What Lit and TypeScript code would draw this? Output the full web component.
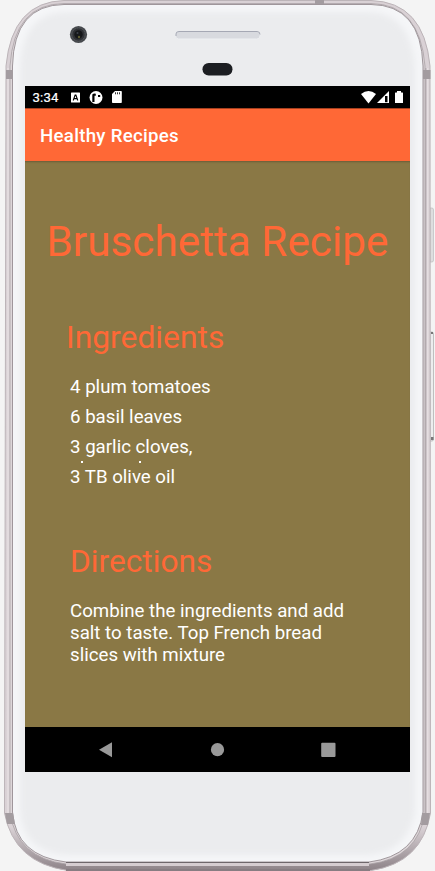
import { LitElement, html, css, svg } from "lit";
import { customElement } from "lit/decorators.js";

@customElement("phone-shell")
class PhoneShell extends LitElement {
  static styles = css`
    :host { display: block; width: 435px; height: 871px; }
    svg { display: block; }
  `;
  render() {
    return html`<svg width="435" height="871" viewBox="0 0 435 871">
      <defs>
        <linearGradient id="base" x1="0" x2="0" y1="0" y2="1">
          <stop offset="0" stop-color="#d9d1d5" /><stop offset=".95" stop-color="#dad2d6" /><stop offset="1" stop-color="#8d8388" />
        </linearGradient>
        <filter id="soft" x="-10%" y="-10%" width="120%" height="120%"><feGaussianBlur stdDeviation="3" /></filter>
        <clipPath id="face"><path d="M64 4.500H371Q421 5 423 66V812Q417 858 369 862H66Q16 858 12.500 812V66Q14 5 64 4.500Z" /></clipPath>
      </defs>
      <path d="M430 208h2q1.500 0 1.500 2v50q0 2-1.500 2h-2z" fill="#dededf" stroke="#b5b5b7" stroke-width=".6" />
      <path d="M430 332h2q1.500 0 1.500 2v105q0 2-1.500 2h-2z" fill="#ededee" stroke="#a9a9a9" stroke-width=".7" />
      <path d="M431 332h2v2h-2zM431 437h2.500v3h-2.500z" fill="#777" />
      <path d="M64 .5H371Q424 2 430 66L430.500 813Q422 863 371 870.500H68Q14 863 4.500 813L6 66Q12 2 64 .5Z" fill="url(#base)" stroke="#bcb4b8" />
      <path d="M64 3.500H371Q420 4 425 66V813Q418 858 370 864H66Q17 858 10 813V66Q14 4 64 3.500Z" fill="#ddd6d9" stroke="#aaa2a6" stroke-width=".8" />
      <path d="M64 4.500H371Q421 5 423 66V812Q417 856 369 862H66Q16 856 12.500 812V66Q14 5 64 4.500Z" fill="#f5f6f8" stroke="#8b8287" stroke-width=".8" />
      <path d="M64 12H371Q410 14 415 66V812Q407 852 369 855H66Q24 852 20 812V66Q23 14 64 12Z" fill="#ebecee" filter="url(#soft)" clip-path="url(#face)" />
      <path d="M427.700 68V813M8 68V813" stroke="#e5dee1" stroke-width="1.500" />
      <path d="M425.800 68V813" stroke="#a1989d" stroke-width=".8" />
      <path d="M66 862.500H369" stroke="#6e676b" stroke-width="1" />
      <path d="M66 864.500H369" stroke="#d5cdd1" stroke-width="3" />
      <path d="M66 870H370" stroke="#877d82" stroke-width="2" />
      <path d="M6 70h7v9H6zM423 70h7.500v9H423zM315 0h9v4h-9zM5 813h8l2 11H7zM422 813h8l-2 12h-7z" fill="#a39ca0" />
      <circle cx="78.500" cy="34.500" r="8.600" fill="#45484c" />
      <circle cx="78.500" cy="34.500" r="6.500" fill="#303236" stroke="#65686c" stroke-width=".8" stroke-dasharray="1 1" />
      <circle cx="78.500" cy="34.500" r="4.200" fill="#15171a" />
      <circle cx="79" cy="37" r="1.200" fill="#5e5d32" />
      <circle cx="77.500" cy="33" r="1" fill="#3c424a" />
      <rect x="175.500" y="31.500" width="84.500" height="7.500" rx="3.200" fill="#d8dadf" stroke="#eef0f2" />
      <path d="M176 36v-2q0-2.500 3-2.500H257q3 0 3 3" fill="none" stroke="#a5a8b4" />
      <rect x="202.500" y="63" width="30" height="12.500" rx="6.200" fill="#1c1e22" />
    </svg>`;
  }
}

@customElement("status-bar")
class StatusBar extends LitElement {
  static styles = css`
    :host { display: flex; height: 22px; background: #000; color: #fff; font: 400 13.200px/22px Roboto, sans-serif; }
    .clock { flex: none; width: 45px; padding-left: 7.500px; box-sizing: border-box; height: 22px; padding-top: 1px; letter-spacing: .2px; -webkit-text-stroke: .2px #fff; }
    .spacer { flex: 1; }
    svg { display: block; flex: none; }
  `;
  render() {
    return html`<span class="clock">3:34</span>
      <svg height="22" width="60" viewBox="70 86 60 22">
        <rect x="71" y="92.500" width="9" height="10" rx=".6" fill="#fff" />
        <path d="M73.200 100.500 75.100 95h.8l1.900 5.500M74 98.600h3" fill="none" stroke="#000" stroke-width="1.100" />
        <circle cx="96" cy="97.500" r="6.500" fill="#fff" />
        <path d="M92.300 94.500q1.500-1.500 3.500-.7v2h-1.300v6.200h-2.200zM98 95h2.200v2H98z" fill="#000" />
        <path d="M115 91H121q.8 0 .8.800v10.400q0 .8-.8.800h-8.200q-.8 0-.8-.8V94z" fill="#fff" />
        <path d="M115.500 92.300v2M117.500 92.300v2M119.500 92.300v2" stroke="#000" stroke-width=".8" />
      </svg>
      <span class="spacer"></span>
      <svg width="50" height="22" viewBox="360 86 50 22">
        <path d="M361 94Q368.500 88 376 94L368.500 103.500Z" fill="#fff" />
        <path d="M389 91V103H377Z" fill="#fff" />
        <path d="M385 96h2.500v6.200h-2.500z" fill="#000" />
        <path d="M397 91h4v1.500h1.500q.5 0 .5.500v10h-8V93q0-.5.500-.5h1.500z" fill="#fff" />
      </svg>`;
  }
}

@customElement("nav-bar")
class NavBar extends LitElement {
  static styles = css`
    :host { display: flex; justify-content: space-between; align-items: center; box-sizing: border-box; height: 45px; padding: 0 74px 0 72px; background: #000; }
    svg { display: block; }
  `;
  render() {
    const icon = (shape: unknown) => html`<svg width="16" height="16" viewBox="0 0 16 16" fill="#999">${shape}</svg>`;
    return html`${icon(svg`<path d="M15 .3v15L2 7.800z" />`)}
      ${icon(svg`<circle cx="8.500" cy="7.700" r="6.600" />`)}
      ${icon(svg`<rect x="1.200" y=".7" width="14.300" height="14.300" rx="1" />`)}`;
  }
}

@customElement("app-root")
class AppRoot extends LitElement {
  static styles = css`
    :host { display: grid; width: 435px; height: 871px; overflow: hidden; background: #f4f4f4; font-family: Roboto, sans-serif; }
    phone-shell, .screen { grid-area: 1 / 1; }
    .screen { width: 385px; height: 686px; margin: 86px 0 0 25px; display: flex; flex-direction: column; background: #8a7845; z-index: 1; }
    .appbar { height: 53px; box-sizing: border-box; border-top: 1px solid #a8401f; padding-left: 15px; background: #ff6836; color: #fff; font-weight: 500; font-size: 18.700px; line-height: 54px; letter-spacing: .27px; }
    main { flex: 1; color: #fff; box-shadow: inset 0 2px 2px -1px #6b5d38; overflow: hidden; white-space: nowrap; }
    h1, h2, ul, p { margin: 0; padding: 0; font-weight: 400; }
    h1, h2 { color: #ff6836; }
    h1 { margin: 56px 0 0 21.500px; font-size: 42.300px; line-height: 50px; }
    .ingredients { margin: 50px 0 0 41px; font-size: 31.800px; line-height: 40px; }
    ul { list-style: none; margin: 15px 0 0 45px; font-size: 18.680px; line-height: 30px; position: relative; }
    .dot { position: absolute; width: 2px; height: 2px; background: #fff; top: 89px; left: 11px; }
    .far { left: 69px; }
    .directions { margin: 50px 0 0 45px; font-size: 31.700px; line-height: 40px; }
    p { margin: 18px 0 0 45px; font-size: 18.700px; line-height: 22px; }
  `;
  render() {
    const items = ["4 plum tomatoes", "6 basil leaves", "3 garlic cloves,", "3 TB olive oil"];
    return html`<phone-shell></phone-shell>
      <div class="screen">
        <status-bar></status-bar>
        <div class="appbar">Healthy Recipes</div>
        <main>
          <h1>Bruschetta Recipe</h1>
          <h2 class="ingredients">Ingredients</h2>
          <ul>${items.map((item) => html`<li>${item}</li>`)}<span class="dot"></span><span class="dot far"></span></ul>
          <h2 class="directions">Directions</h2>
          <p>Combine the ingredients and add<br />salt to taste. Top French bread<br />slices with mixture</p>
        </main>
        <nav-bar></nav-bar>
      </div>`;
  }
}
